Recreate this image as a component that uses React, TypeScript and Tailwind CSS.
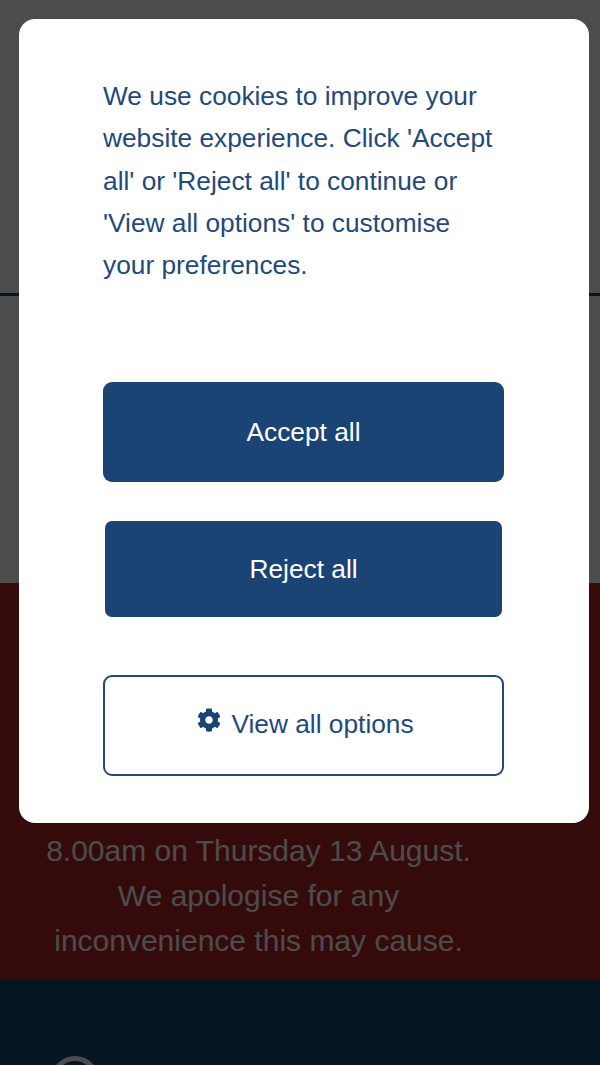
import { FaCog } from 'react-icons/fa'

const font = "font-['Liberation_Sans',Arial,sans-serif]"

function PageBehind() {
  return (
    <div className="flex h-full flex-col bg-white">
      <header className="h-[296px] shrink-0 border-b-[3px] border-[#11466e]" />
      <div className="h-[287px] shrink-0" />
      <section className="flex h-[397px] shrink-0 flex-col justify-end bg-[#ad2222] pb-[17px] pr-[83px]">
        <p className="text-center text-[30px] leading-[45px] text-white">
          8.00am on Thursday 13 August.
          <br />
          We apologise for any
          <br />
          inconvenience this may cause.
        </p>
      </section>
      <footer className="flex-1 overflow-hidden bg-[#11466e] pl-[51px] pt-[76px]">
        <div className="size-[48px] rounded-full border-[5px] border-white" />
      </footer>
    </div>
  )
}

export default function App() {
  return (
    <div className={`relative h-[1065px] w-[600px] overflow-hidden ${font}`}>
      <PageBehind />
      <div className="absolute inset-0 bg-black/70" />

      <div className="absolute left-[19px] top-[19px] h-[804px] w-[570px] rounded-[16px] bg-white px-[84px] pt-[56px]">
        <p className="text-[26.3px] leading-[42.25px] text-[#1f4a7c]">
          We use cookies to improve your website experience. Click 'Accept all' or 'Reject all' to continue or 'View all options' to customise your preferences.
        </p>

        <div className="mr-[1px] mt-[96px] flex flex-col items-center">
          <button className="flex h-[100px] w-[401px] items-center justify-center rounded-[9px] bg-[#1a4474] text-[26.3px] text-white">
            Accept all
          </button>
          <button className="mt-[39px] flex h-[96px] w-[397px] items-center justify-center rounded-[7px] bg-[#1a4474] text-[26.3px] text-white">
            Reject all
          </button>
          <button className="mt-[58px] flex h-[101px] w-[401px] items-center justify-center gap-[10px] rounded-[9px] border-2 border-[#1f4a7c] bg-white pb-[2px] pl-[4px] text-[26.3px] text-[#1f4a7c]">
            <FaCog className="mb-[9px] size-[24px] text-[#1a4474]" />
            View all options
          </button>
        </div>
      </div>
    </div>
  )
}
